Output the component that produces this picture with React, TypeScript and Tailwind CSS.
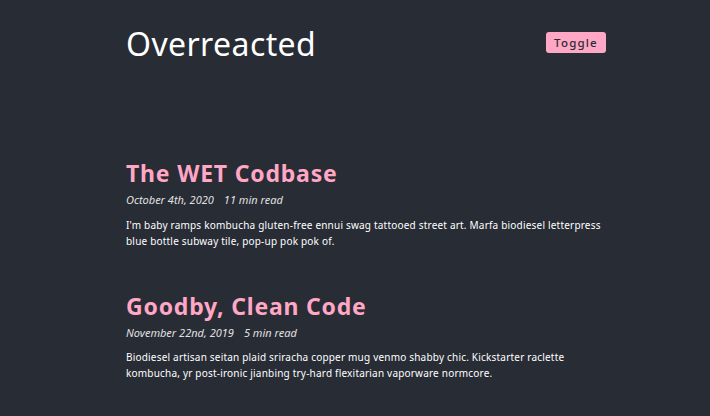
import React from 'react';

const posts = [
  {
    title: 'The WET Codbase',
    date: 'October 4th, 2020',
    read: '11 min read',
    body: "I'm baby ramps kombucha gluten-free ennui swag tattooed street art. Marfa biodiesel letterpress blue bottle subway tile, pop-up pok pok of.",
  },
  {
    title: 'Goodby, Clean Code',
    date: 'November 22nd, 2019',
    read: '5 min read',
    body: 'Biodiesel artisan seitan plaid sriracha copper mug venmo shabby chic. Kickstarter raclette kombucha, yr post-ironic jianbing try-hard flexitarian vaporware normcore.',
  },
];

const App: React.FC = () => {
  return (
    <div className="min-h-screen bg-[#282c35] pl-[126px] font-['Noto_Sans',sans-serif] text-white">
      <div className="w-[480px] pt-[24px]">
        {/* Header */}
        <header className="flex items-start justify-between">
          <h1 className="text-[32px] leading-[40px] font-normal tracking-[0.4px]">Overreacted</h1>
          <button className="mt-[8px] h-[21px] w-[60px] rounded-[3px] bg-[#ffa7c4] text-[11.5px] font-medium tracking-[1.2px] text-[#282c35]">
            Toggle
          </button>
        </header>

        {/* Posts */}
        <main className="mt-[94px] flex flex-col gap-[42px]">
          {posts.map((post) => (
            <article key={post.title}>
              <h2 className="text-[23px] leading-[30px] font-bold tracking-[0.8px] text-[#ffa7c4]">{post.title}</h2>
              <div className="mt-[4px] flex gap-[10px] text-[11px] italic text-[#e0e0e0]">
                <span>{post.date}</span>
                <span>{post.read}</span>
              </div>
              <p className="mt-[8px] text-[10px] leading-[16px] tracking-[0.2px]">{post.body}</p>
            </article>
          ))}
        </main>
      </div>
    </div>
  );
};

export default App;
